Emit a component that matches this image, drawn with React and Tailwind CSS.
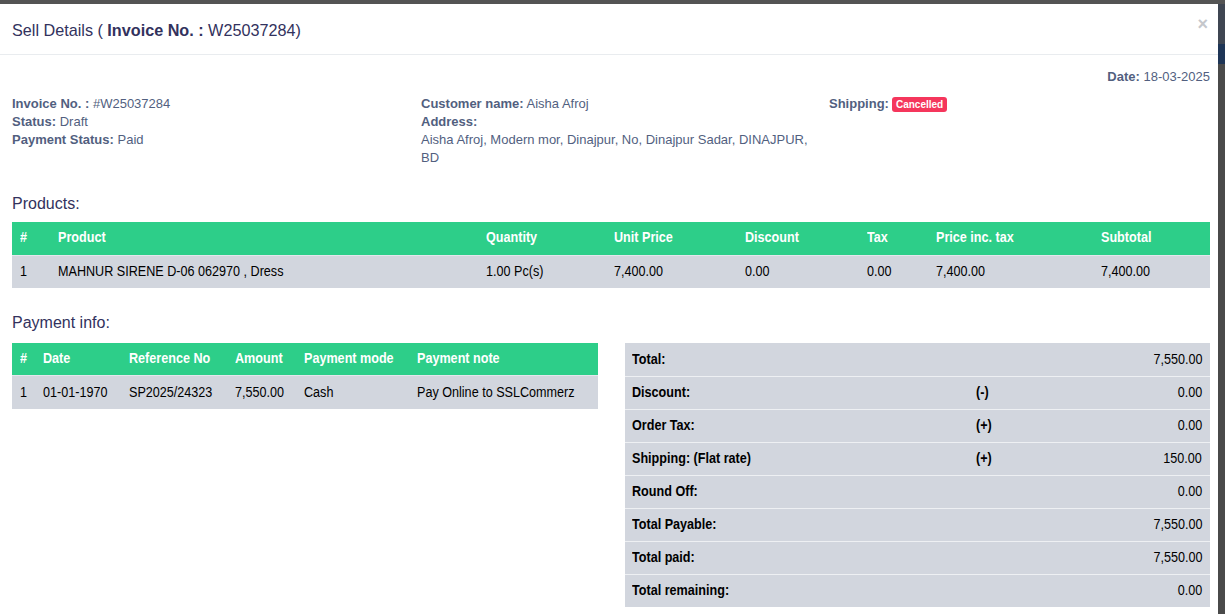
import React from 'react';

const products = [
    { no: 1, name: 'MAHNUR SIRENE D-06 062970 , Dress', qty: '1.00 Pc(s)', unit: '7,400.00', discount: '0.00', tax: '0.00', inc: '7,400.00', subtotal: '7,400.00' },
];

const payments = [
    { no: 1, date: '01-01-1970', ref: 'SP2025/24323', amount: '7,550.00', mode: 'Cash', note: 'Pay Online to SSLCommerz' },
];

const totals = [
    { label: 'Total:', sign: '', value: '7,550.00' },
    { label: 'Discount:', sign: '(-)', value: '0.00' },
    { label: 'Order Tax:', sign: '(+)', value: '0.00' },
    { label: 'Shipping: (Flat rate)', sign: '(+)', value: '150.00' },
    { label: 'Round Off:', sign: '', value: '0.00' },
    { label: 'Total Payable:', sign: '', value: '7,550.00' },
    { label: 'Total paid:', sign: '', value: '7,550.00' },
    { label: 'Total remaining:', sign: '', value: '0.00' },
];

const T = ({ children, right }) => (
    <span className={`inline-block whitespace-nowrap scale-x-90 ${right ? 'origin-right' : 'origin-left'}`}>{children}</span>
);

const InfoLine = ({ label, children }) => (
    <p className="leading-[18px]">
        <span className="font-bold">{label}</span> {children}
    </p>
);

export default function App() {
    return (
        <div className="w-[1225px] h-[614px] bg-[#4a4a4a] overflow-hidden font-[family-name:'Liberation_Sans',Arial,sans-serif]">
            <div className="h-[4px] bg-[#545454]" />
            <div className="flex h-[610px]">
                <div className="w-[1218px] bg-white">
                    {/* Header */}
                    <div className="h-[51px] pl-3 pr-[10px] flex items-center justify-between border-b border-[#e9ecef]">
                        <h4 className="text-[16.2px] text-[#32325d] pt-[2px]">
                            Sell Details ( <span className="font-bold">Invoice No. :</span> W25037284)
                        </h4>
                        <button className="text-[#c5c7cc] text-[18px] leading-none font-bold -mt-[10px]">×</button>
                    </div>

                    <div className="px-3 text-[13px] text-[#525f7f]">
                        <div className="pt-[13px] flex justify-end leading-[18px]">
                            <span className="mr-[-4px]"><span className="font-bold">Date:</span> 18-03-2025</span>
                        </div>

                        <div className="grid grid-cols-[409px_408px_1fr] mt-[9px]">
                            <div>
                                <InfoLine label="Invoice No. :">#W25037284</InfoLine>
                                <InfoLine label="Status:">Draft</InfoLine>
                                <InfoLine label="Payment Status:">Paid</InfoLine>
                            </div>
                            <div>
                                <InfoLine label="Customer name:">Aisha Afroj</InfoLine>
                                <p className="leading-[18px] font-bold">Address:</p>
                                <p className="leading-[18px] w-[392px]">Aisha Afroj, Modern mor, Dinajpur, No, Dinajpur Sadar, DINAJPUR, BD</p>
                            </div>
                            <div>
                                <p className="leading-[18px] flex items-center gap-[3px]">
                                    <span className="font-bold">Shipping:</span>
                                    <span className="bg-[#f5365c] text-white text-[10px] font-bold leading-[15px] px-[4px] rounded-[3px]">Cancelled</span>
                                </p>
                            </div>
                        </div>

                        {/* Products */}
                        <h4 className="text-[16px] text-[#32325d] leading-[22px] mt-[26px]">Products:</h4>
                        <table className="mt-[7px] w-[1198px] table-fixed border-collapse text-[14px]">
                            <colgroup>
                                <col className="w-[38px]" />
                                <col className="w-[428px]" />
                                <col className="w-[128px]" />
                                <col className="w-[131px]" />
                                <col className="w-[122px]" />
                                <col className="w-[69px]" />
                                <col className="w-[165px]" />
                                <col className="w-[117px]" />
                            </colgroup>
                            <thead>
                                <tr className="bg-[#2dce89] text-white h-[33px] text-left">
                                    {['#', 'Product', 'Quantity', 'Unit Price', 'Discount', 'Tax', 'Price inc. tax', 'Subtotal'].map(h => (
                                        <th key={h} className="px-[8px] pb-[1px] font-bold"><T>{h}</T></th>
                                    ))}
                                </tr>
                            </thead>
                            <tbody>
                                {products.map(p => (
                                    <tr key={p.no} className="bg-[#d2d6de] text-black h-[33px] border-t border-[#e4e7ec]">
                                        {[p.no, p.name, p.qty, p.unit, p.discount, p.tax, p.inc, p.subtotal].map((v, i) => (
                                            <td key={i} className="px-[8px]"><T>{v}</T></td>
                                        ))}
                                    </tr>
                                ))}
                            </tbody>
                        </table>

                        {/* Payment info + totals */}
                        <div className="flex items-start gap-[27px]">
                            <div>
                                <h4 className="text-[16px] text-[#32325d] leading-[22px] mt-[24px]">Payment info:</h4>
                                <table className="mt-[9px] w-[586px] table-fixed border-collapse text-[14px]">
                                    <colgroup>
                                        <col className="w-[23px]" />
                                        <col className="w-[86px]" />
                                        <col className="w-[106px]" />
                                        <col className="w-[69px]" />
                                        <col className="w-[113px]" />
                                        <col className="w-[189px]" />
                                    </colgroup>
                                    <thead>
                                        <tr className="bg-[#2dce89] text-white h-[32px] text-left">
                                            {['#', 'Date', 'Reference No', 'Amount', 'Payment mode', 'Payment note'].map(h => (
                                                <th key={h} className="pl-[8px] font-bold"><T>{h}</T></th>
                                            ))}
                                        </tr>
                                    </thead>
                                    <tbody>
                                        {payments.map(p => (
                                            <tr key={p.no} className="bg-[#d2d6de] text-black h-[34px] border-t border-[#e4e7ec]">
                                                {[p.no, p.date, p.ref, p.amount, p.mode, p.note].map((v, i) => (
                                                    <td key={i} className="pl-[8px]"><T>{v}</T></td>
                                                ))}
                                            </tr>
                                        ))}
                                    </tbody>
                                </table>
                            </div>

                            <table className="mt-[55px] w-[585px] table-fixed border-collapse text-[14px] text-black">
                                <colgroup>
                                    <col className="w-[344px]" />
                                    <col className="w-[120px]" />
                                    <col className="w-[121px]" />
                                </colgroup>
                                <tbody>
                                    {totals.map((t, i) => (
                                        <tr key={t.label} className={`bg-[#d2d6de] h-[33px] ${i > 0 ? 'border-t border-[#eef0f3]' : ''}`}>
                                            <td className="pl-[7px] font-bold"><T>{t.label}</T></td>
                                            <td className="pl-[7px] font-bold"><T>{t.sign}</T></td>
                                            <td className="pr-[8px] text-right"><T right>{t.value}</T></td>
                                        </tr>
                                    ))}
                                </tbody>
                            </table>
                        </div>
                    </div>
                </div>
                <div className="flex-1 bg-[#4a4a4a] flex flex-col">
                    <div className="h-[40px] bg-[#3f4652]" />
                    <div className="h-[20px] bg-[#1e3556]" />
                </div>
            </div>
        </div>
    );
}
